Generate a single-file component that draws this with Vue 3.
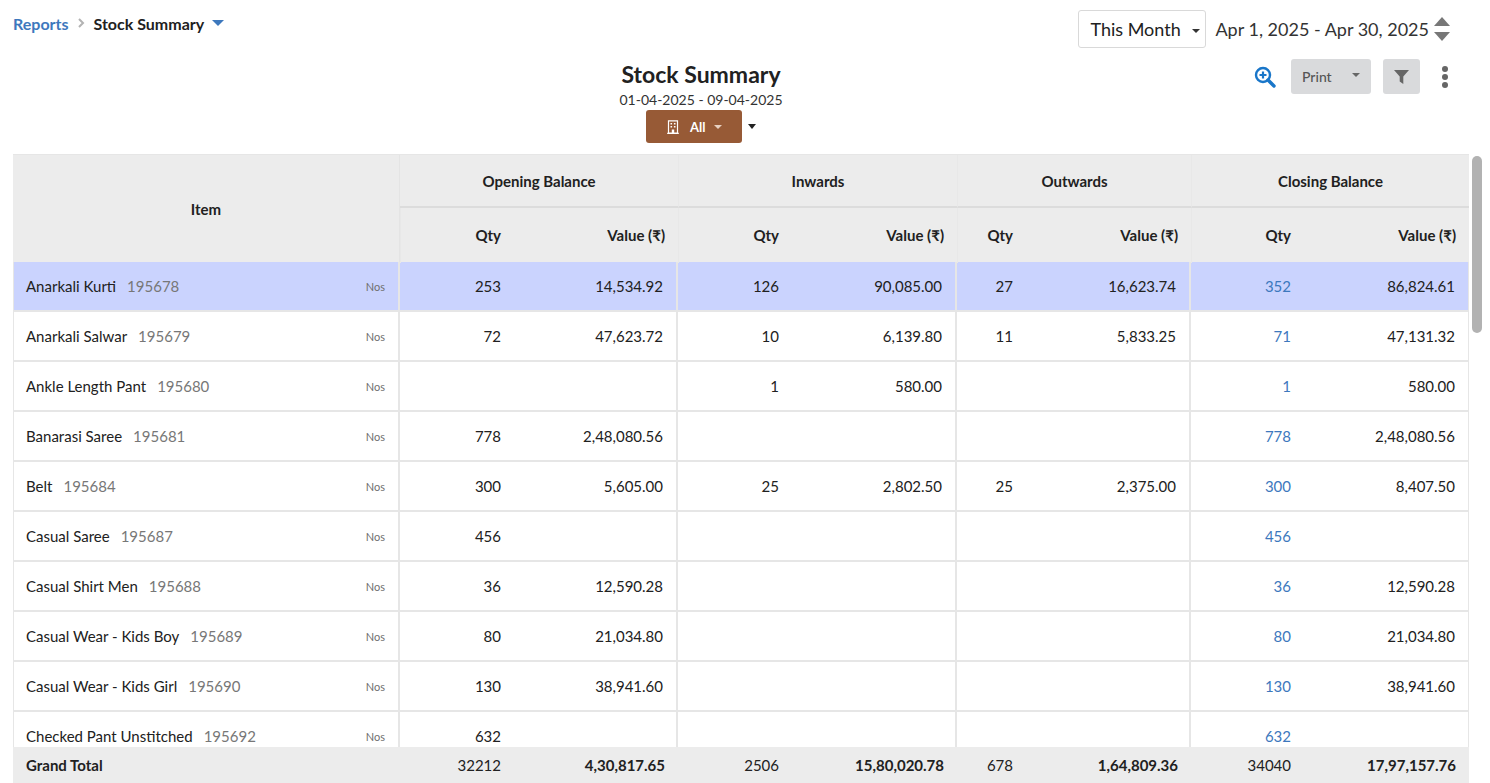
<script setup>
const rows = [
  ['Anarkali Kurti', '195678', '253', '14,534.92', '126', '90,085.00', '27', '16,623.74', '352', '86,824.61'],
  ['Anarkali Salwar', '195679', '72', '47,623.72', '10', '6,139.80', '11', '5,833.25', '71', '47,131.32'],
  ['Ankle Length Pant', '195680', '', '', '1', '580.00', '', '', '1', '580.00'],
  ['Banarasi Saree', '195681', '778', '2,48,080.56', '', '', '', '', '778', '2,48,080.56'],
  ['Belt', '195684', '300', '5,605.00', '25', '2,802.50', '25', '2,375.00', '300', '8,407.50'],
  ['Casual Saree', '195687', '456', '', '', '', '', '', '456', ''],
  ['Casual Shirt Men', '195688', '36', '12,590.28', '', '', '', '', '36', '12,590.28'],
  ['Casual Wear - Kids Boy', '195689', '80', '21,034.80', '', '', '', '', '80', '21,034.80'],
  ['Casual Wear - Kids Girl', '195690', '130', '38,941.60', '', '', '', '', '130', '38,941.60'],
  ['Checked Pant Unstitched', '195692', '632', '', '', '', '', '', '632', ''],
]
const groups = ['Opening Balance', 'Inwards', 'Outwards', 'Closing Balance']
const totals = ['32212', '4,30,817.65', '2506', '15,80,020.78', '678', '1,64,809.36', '34040', '17,97,157.76']
</script>

<template>
  <div class="page">
    <header class="topbar">
      <nav class="crumbs">
        <a class="crumb-link">Reports</a>
        <svg class="chev" width="8" height="10" viewBox="0 0 8 10"><path d="M2 1l4 4-4 4" fill="none" stroke="#b3b3b3" stroke-width="2"/></svg>
        <span class="crumb-current">Stock Summary</span>
        <span class="crumb-caret"></span>
      </nav>
      <div class="range">
        <button class="period">This Month<span class="period-caret"></span></button>
        <span class="dates">Apr 1, 2025 - Apr 30, 2025</span>
        <span class="steppers"><i class="up"></i><i class="down"></i></span>
      </div>
    </header>

    <section class="titlebar">
      <div class="title-block">
        <h1>Stock Summary</h1>
        <div class="subtitle">01-04-2025 - 09-04-2025</div>
        <div class="branch">
          <button class="branch-btn">
            <svg width="12" height="14" viewBox="0 0 12 14"><path d="M1.5.8h9v12.4h-9zM.2 13.3h11.6" fill="none" stroke="#fff" stroke-width="1.2"/><path d="M3.5 3h1.6v1.6H3.5zM6.9 3h1.6v1.6H6.9zM3.5 6h1.6v1.6H3.5zM6.9 6h1.6v1.6H6.9zM4.8 9.5h2.4V13H4.8z" fill="#fff"/></svg>
            <span>All</span>
            <i class="mini-caret"></i>
          </button>
          <i class="branch-caret"></i>
        </div>
      </div>
      <div class="actions">
        <svg class="zoom" width="22" height="22" viewBox="0 0 22 22"><circle cx="9" cy="9" r="7" fill="none" stroke="#1976c9" stroke-width="2.4"/><path d="M14 14l6 6" stroke="#1976c9" stroke-width="3.4" stroke-linecap="round"/><path d="M9 5.5v7M5.5 9h7" stroke="#1976c9" stroke-width="2.2"/></svg>
        <button class="print">Print<i></i></button>
        <button class="filter"><svg width="15" height="14" viewBox="0 0 15 14"><path d="M0 0h15L9.3 6.6V14L5.7 11.6V6.6z" fill="#666"/></svg></button>
        <span class="kebab"><i></i><i></i><i></i></span>
      </div>
    </section>

    <main class="table-area">
      <div class="grid head">
        <div class="th item-head">Item</div>
        <div v-for="g in groups" :key="g" class="th group">{{ g }}</div>
        <template v-for="g in groups" :key="g">
          <div class="th sub first">Qty</div>
          <div class="th sub">Value (₹)</div>
        </template>
      </div>
      <div class="body">
        <div v-for="(r, i) in rows" :key="r[0]" class="grid row" :class="{ active: i === 0 }">
          <div class="item">
            <span class="name">{{ r[0] }}</span>
            <span class="code">{{ r[1] }}</span>
            <span class="unit">Nos</span>
          </div>
          <div
            v-for="(v, j) in r.slice(2)"
            :key="j"
            class="num"
            :class="{ first: j % 2 === 0, link: j === 6 }"
          >{{ v }}</div>
        </div>
      </div>
      <div class="grid total">
        <div class="total-label">Grand Total</div>
        <div v-for="(v, j) in totals" :key="j" class="num" :class="{ strong: j % 2 === 1 }">{{ v }}</div>
      </div>
      <div class="scrollbar"></div>
    </main>
  </div>
</template>

<style>
html, body { margin: 0; background: #fff; overflow: hidden; }
</style>

<style scoped>
.page {
  width: 1490px;
  height: 783px;
  overflow: hidden;
  font-family: Lato, "Noto Sans", sans-serif;
  color: #212121;
  background: #fff;
}
button { font-family: inherit; }
.topbar {
  height: 48px;
  padding: 10px 40px 0 13px;
  box-sizing: border-box;
  display: flex;
  justify-content: space-between;
  align-items: flex-start;
}
.crumbs { display: flex; align-items: center; height: 26px; font-size: 16px; font-weight: 700; }
.crumb-link { color: #3d78bd; }
.chev { margin: 0 9px 0 8px; }
.crumb-current { color: #212121; }
.crumb-caret {
  margin-left: 8px;
  border: 6px solid transparent;
  border-top: 6px solid #3d78bd;
  border-bottom: 0;
}
.range { display: flex; align-items: center; margin-top: 0; }
.period {
  width: 128px;
  height: 38px;
  padding: 0 0 0 11px;
  background: #fff;
  border: 1px solid #d9d9d9;
  border-radius: 3px;
  font-size: 18px;
  color: #212121;
  display: flex;
  align-items: center;
  text-align: left;
  box-sizing: content-box;
  box-sizing: border-box;
}
.period-caret {
  margin-left: 11px;
  margin-top: 3px;
  border: 4px solid transparent;
  border-top: 4px solid #333;
  border-bottom: 0;
}
.dates { font-size: 18px; margin-left: 9px; color: #333; }
.steppers { display: flex; flex-direction: column; gap: 6px; margin-left: 5px; }
.steppers i { display: block; width: 0; height: 0; border-left: 8px solid transparent; border-right: 8px solid transparent; }
.steppers .up { border-bottom: 9px solid #777; }
.steppers .down { border-top: 9px solid #777; }

.titlebar {
  height: 106px;
  display: flex;
  align-items: flex-start;
}
.title-block {
  width: 200px;
  margin-left: 601px;
  text-align: center;
}
h1 { margin: 12px 0 0; font-size: 23px; line-height: 28px; font-weight: 700; color: #212121; }
.subtitle { font-size: 14px; line-height: 17px; margin-top: 3px; color: #333; }
.branch { display: flex; justify-content: center; align-items: center; margin-top: 2px; }
.branch-btn {
  width: 96px;
  height: 33px;
  background: #975a36;
  border: 0;
  border-radius: 3px;
  color: #fff;
  font-size: 13px;
  font-weight: 700;
  display: flex;
  align-items: center;
  padding: 0 0 0 21px;
  box-sizing: border-box;
}
.branch-btn span { margin-left: 11px; }
.mini-caret { margin-left: 9px; border: 4px solid transparent; border-top: 4px solid #e8d0c0; border-bottom: 0; }
.branch-caret { margin-left: 6px; border: 4px solid transparent; border-top: 5px solid #222; border-bottom: 0; }
.actions {
  margin-left: 453px;
  margin-top: 11px;
  display: flex;
  align-items: center;
}
.zoom { margin-top: 0; }
.print {
  margin-left: 15px;
  width: 80px;
  height: 35px;
  background: #d9dadc;
  border: 0;
  border-radius: 3px;
  color: #555;
  font-size: 14px;
  font-weight: 500;
  text-align: left;
  padding: 0 0 0 11px;
  display: flex;
  align-items: center;
}
.print i { margin-left: 20px; margin-top: -3px; border: 4px solid transparent; border-top: 4px solid #666; border-bottom: 0; }
.filter {
  margin-left: 12px;
  width: 37px;
  height: 35px;
  background: #d9dadc;
  border: 0;
  border-radius: 3px;
  padding: 0;
  display: flex;
  align-items: center;
  justify-content: center;
}
.kebab { margin-left: 22px; display: flex; flex-direction: column; gap: 2px; }
.kebab i { display: block; width: 6px; height: 6px; border-radius: 50%; background: #666; }

.table-area {
  position: relative;
  margin-left: 13px;
  width: 1456px;
}
.grid {
  display: grid;
  grid-template-columns: 387px 114px 164px 114px 165px 69px 165px 113px 165px;
}
.head {
  background: #ececec;
  height: 108px;
  grid-template-rows: 53px 55px;
  border-top: 1px solid #e6e6e6;
  box-sizing: border-box;
  font-size: 15px;
  font-weight: 700;
  color: #212121;
}
.th { display: flex; align-items: center; }
.item-head { grid-row: 1 / span 2; justify-content: center; border-right: 1px solid #e4e4e4; }
.group {
  grid-column: span 2;
  justify-content: center;
  border-left: 1px solid #e8e8e8;
  border-bottom: 2px solid #dcdcdc;
}
.sub { justify-content: flex-end; padding-right: 13px; padding-bottom: 1px; }
.sub.first { border-left: 1px solid #e8e8e8; }
.group:nth-child(2) { border-left: 0; }

.body { height: 485px; overflow: hidden; }
.row {
  height: 50px;
  box-sizing: border-box;
  border-bottom: 2px solid #e6e6e6;
  border-left: 1px solid #e6e6e6;
  border-right: 1px solid #e6e6e6;
  margin-right: 0;
  font-size: 15px;
  grid-template-columns: 386px 114px 164px 114px 165px 69px 165px 113px 164px;
  color: #212121;
}
.row.active { background: #cad3fe; }
.item { display: flex; align-items: center; padding: 0 13px 0 12px; border-right: 2px solid #e6e6e6; }
.code { margin-left: 11px; color: #777; }
.unit { margin-left: auto; font-size: 11px; color: #6f6f6f; }
.num {
  display: flex;
  align-items: center;
  justify-content: flex-end;
  padding-right: 13px;
  box-sizing: border-box;
}
.row .num.first { border-left: 0; }
.row .num:nth-child(odd) { border-right: 2px solid #e6e6e6; padding-right: 13px; }
.row .num:last-child { border-right: 0; }
.link { color: #3d78bd; }
.total {
  height: 36px;
  background: #ececec;
  font-size: 15px;
}
.total-label { display: flex; align-items: center; padding-left: 13px; font-weight: 700; }
.strong { font-weight: 700; }
.scrollbar {
  position: absolute;
  left: 1459px;
  top: 2px;
  width: 10px;
  height: 177px;
  border-radius: 5px;
  background: #b2b2b2;
}
</style>
